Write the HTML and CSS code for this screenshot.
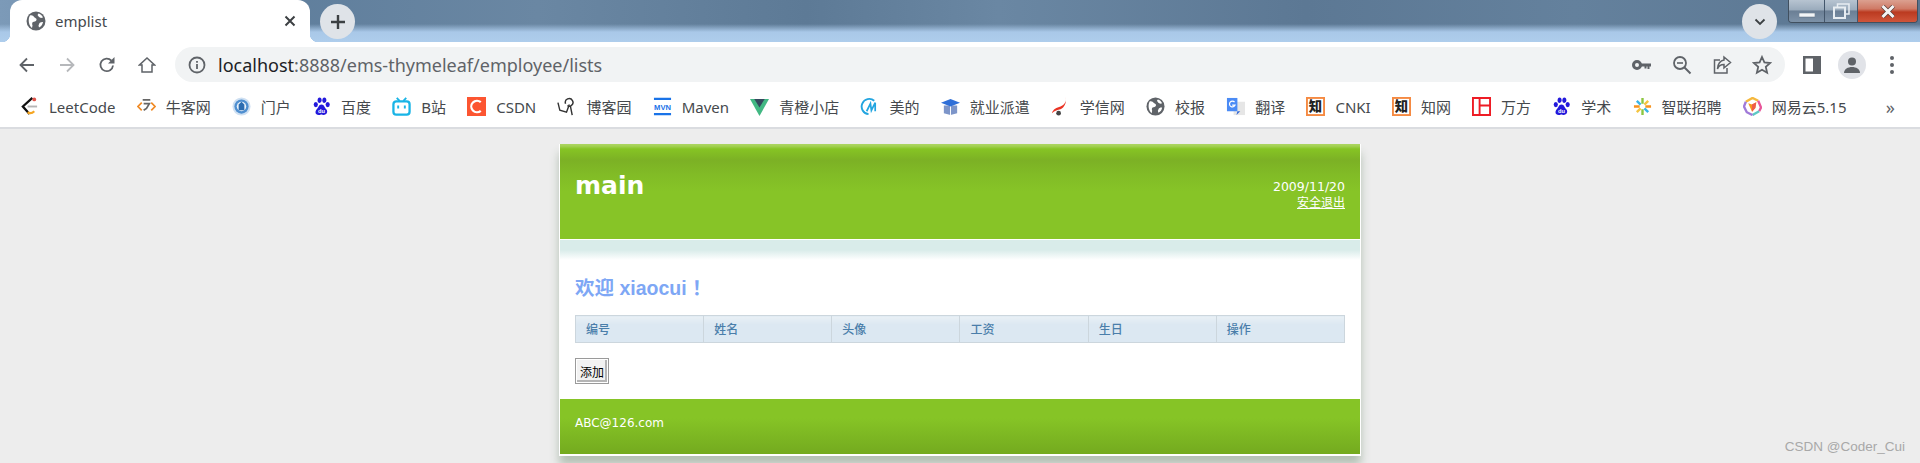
FILE: index.html
```html
<!DOCTYPE html>
<html lang="zh">
<head>
<meta charset="utf-8">
<title>emplist</title>
<link rel="stylesheet" href="styles.css">
</head>
<body>
<svg class="defs" width="0" height="0" aria-hidden="true">
  <defs>
    <symbol id="globe" viewBox="0 0 20 20"><circle cx="10" cy="10" r="9.500" fill="#5f6368"/><path d="M4 4.500c2-.5 3.500.5 4 1.500s3 1 2.500 3-2.500 1.500-3.500 2-1 2.500-.5 3.500l-.5 2.500C3 15 1.500 8.500 4 4.500zM12.500 2.500c2 .5 3.500 2 4.500 4l-2 .5-2-1-1.500-2zM13.500 12c1-1 2.500-1 3.500-1-.5 2.500-1.500 4.500-4 5.500l-.5-2z" fill="#fff"/></symbol>
    <symbol id="paw" viewBox="0 0 20 20"><g fill="#2319dc"><ellipse cx="4" cy="8" rx="2.200" ry="2.800"/><ellipse cx="8" cy="3.500" rx="2.100" ry="2.900"/><ellipse cx="13" cy="3.500" rx="2.100" ry="2.900"/><ellipse cx="16.500" cy="8" rx="2.200" ry="2.800"/><path d="M10 8c3 0 3 3 5 5s1 6-3 6c-1 0-1-.5-2-.5S9 19 7 19c-4 0-4-4-2-6s2-5 5-5z"/></g><text x="10" y="17" text-anchor="middle" class="paw-text">du</text></symbol>
    <symbol id="zhi" viewBox="0 0 20 20"><rect x="1" y="1" width="18" height="18" fill="#fff" stroke="#f58a42" stroke-width="2"/><text x="10" y="15" text-anchor="middle" class="zhi-text">知</text></symbol>
  </defs>
</svg>
<header class="chrome">
  <div class="tabstrip">
    <div class="tab">
      <svg class="tab-ico" width="20" height="20"><use href="#globe"/></svg>
      <span class="tab-title">emplist</span>
      <svg class="tab-close" width="12" height="12" viewBox="0 0 12 12"><path d="M1.500 1.500l9 9M10.500 1.500l-9 9" stroke="#3c4043" stroke-width="2"/></svg>
    </div>
    <div class="round-btn new-tab"><svg width="16" height="16" viewBox="0 0 16 16"><path d="M8 1v14M1 8h14" stroke="#3c4043" stroke-width="2.400"/></svg></div>
    <div class="spacer"></div>
    <div class="round-btn tab-search"><svg width="12" height="8" viewBox="0 0 12 8"><path d="M1.500 1.500L6 6l4.500-4.500" fill="none" stroke="#3c4043" stroke-width="1.800"/></svg></div>
    <div class="winbtns">
      <div class="win win-min"><svg width="16" height="5"><rect width="16" height="4" fill="#f2f5f7" stroke="#56677a" stroke-width=".5"/></svg></div>
      <div class="win win-max"><svg width="17" height="16" viewBox="0 0 17 16"><path d="M4.500 4V1h11.500v10h-4" fill="none" stroke="#e8edf2" stroke-width="1.500"/><path d="M1 4.500h11v10.500H1z" fill="none" stroke="#e8edf2" stroke-width="2"/></svg></div>
      <div class="win win-close"><svg width="16" height="13" viewBox="0 0 16 13"><path d="M2.500 1l11 11M13.500 1l-11 11" stroke="#5a3a34" stroke-width="4.400"/><path d="M2.500 1l11 11M13.500 1l-11 11" stroke="#f4f4f4" stroke-width="3"/></svg></div>
    </div>
  </div>
  <div class="toolbar">
    <div class="tool"><svg width="18" height="18" viewBox="0 0 18 18"><path d="M16 9H3M9 2.500L2.500 9 9 15.500" fill="none" stroke="#5f6368" stroke-width="1.800"/></svg></div>
    <div class="tool"><svg width="18" height="18" viewBox="0 0 18 18"><path d="M2 9h13M9 2.500L15.500 9 9 15.500" fill="none" stroke="#b6b8bb" stroke-width="1.800"/></svg></div>
    <div class="tool"><svg width="18" height="18" viewBox="0 0 18 18"><path d="M15 9.500A6.300 6.300 0 1 1 13.400 4.600" fill="none" stroke="#5f6368" stroke-width="1.800"/><path d="M16.500 1v6.500H10z" fill="#5f6368"/></svg></div>
    <div class="tool"><svg width="18" height="18" viewBox="0 0 18 18"><path d="M9 2L1.500 9H4v7h10V9h2.500z" fill="none" stroke="#5f6368" stroke-width="1.500"/></svg></div>
    <div class="omnibox">
      <svg class="info" width="18" height="18" viewBox="0 0 18 18"><circle cx="9" cy="9" r="7.500" fill="none" stroke="#5f6368" stroke-width="1.800"/><path d="M9 8v5M9 5v1.800" stroke="#5f6368" stroke-width="1.800"/></svg>
      <div class="url"><span class="host">localhost</span>:8888/ems-thymeleaf/employee/lists</div>
      <div class="omni-act"><svg width="20" height="12" viewBox="0 0 20 12"><circle cx="5" cy="6" r="3.500" fill="none" stroke="#5f6368" stroke-width="3"/><path d="M9 4.500h10v3h-1.500v2.500h-2V7.500h-1V9.500h-2V7.500H9z" fill="#5f6368"/></svg></div>
      <div class="omni-act"><svg width="20" height="20" viewBox="0 0 20 20"><circle cx="8" cy="8" r="6" fill="none" stroke="#5f6368" stroke-width="1.800"/><path d="M12.500 12.500l6 6" stroke="#5f6368" stroke-width="2"/><path d="M5 8h6" stroke="#5f6368" stroke-width="1.600"/></svg></div>
      <div class="omni-act"><svg width="20" height="20" viewBox="0 0 20 20"><path d="M8 5H2.500v13H15v-5" fill="none" stroke="#5f6368" stroke-width="1.500"/><path d="M12 2l6.500 5.500L12 13V9.500C9 9.500 6.500 11 5.500 14c0-5 3-8.500 6.500-9z" fill="none" stroke="#5f6368" stroke-width="1.500"/></svg></div>
      <div class="omni-act"><svg width="20" height="20" viewBox="0 0 20 20"><path d="M10 2l2.400 5.400 5.800.6-4.400 3.900 1.300 5.800-5.100-3-5.100 3 1.300-5.800L1.800 8l5.800-.6z" fill="none" stroke="#5f6368" stroke-width="1.800"/></svg></div>
    </div>
    <div class="tool side"><svg width="18" height="18" viewBox="0 0 18 18"><path d="M0 0h18v18H0zM2.500 2.500v13H10v-13z" fill="#5f6368" fill-rule="evenodd"/></svg></div>
    <div class="tool"><div class="avatar"><svg width="18" height="18" viewBox="0 0 18 18"><circle cx="9" cy="5.500" r="4" fill="#5f6368"/><path d="M1 17c0-4 4-6 8-6s8 2 8 6z" fill="#5f6368"/></svg></div></div>
    <div class="tool"><svg width="6" height="20" viewBox="0 0 6 20"><circle cx="3" cy="3" r="2" fill="#5f6368"/><circle cx="3" cy="10" r="2" fill="#5f6368"/><circle cx="3" cy="17" r="2" fill="#5f6368"/></svg></div>
  </div>
  <nav class="bookmarks">
    <a class="bm"><svg class="bi" viewBox="0 0 20 20"><path d="M13 1L3 10l7 8" fill="none" stroke="#111" stroke-width="2.400"/><path d="M8 10h10" stroke="#b5b5b5" stroke-width="2"/><path d="M8 16c3 2 5 1 7-1" fill="none" stroke="#f5a623" stroke-width="2.400"/><circle cx="15" cy="2.500" r="2" fill="#e0544a"/></svg><span>LeetCode</span></a>
    <a class="bm"><svg class="bi" viewBox="0 0 20 20"><path d="M5 6l-4 4 4 4M15 6l4 4-4 4" fill="none" stroke="#f08a24" stroke-width="1.800"/><path d="M6 3h8M7 7h6l-3 5-3 2" fill="none" stroke="#666" stroke-width="1.800"/></svg><span>牛客网</span></a>
    <a class="bm"><svg class="bi" viewBox="0 0 20 20"><circle cx="10" cy="10" r="9.500" fill="#cfe0f2"/><circle cx="10" cy="10" r="7.500" fill="#4f8fd0"/><circle cx="10" cy="10" r="5" fill="#eaf2fa"/><path d="M7 14V8l3-3 3 3v6z" fill="#2c6cb0"/></svg><span>门户</span></a>
    <a class="bm"><svg class="bi"><use href="#paw"/></svg><span>百度</span></a>
    <a class="bm"><svg class="bi" viewBox="0 0 20 20"><path d="M5 1l3 3M15 1l-3 3" stroke="#19b4e6" stroke-width="2"/><rect x="1.500" y="4.500" width="17" height="14" rx="3" fill="#fff" stroke="#19b4e6" stroke-width="2.400"/><path d="M6.500 9v3M13.500 9v3" stroke="#19b4e6" stroke-width="2"/></svg><span>B站</span></a>
    <a class="bm"><svg class="bi" viewBox="0 0 20 20"><rect width="20" height="20" fill="#fc5531"/><path d="M14.500 5.500A6 6 0 1 0 14.500 14.500" fill="none" stroke="#fff" stroke-width="2.400"/></svg><span>CSDN</span></a>
    <a class="bm"><svg class="bi" viewBox="0 0 20 20"><path d="M1 6l2 8 7 2 3-8" fill="none" stroke="#333" stroke-width="1.500"/><path d="M9 7a4 4 0 1 1 6 2c-1 1-3 1-4 0M14 9l1 5 1 5" fill="none" stroke="#333" stroke-width="1.500"/></svg><span>博客园</span></a>
    <a class="bm"><svg class="bi" viewBox="0 0 20 20"><path d="M1 2h18M1 18h18" stroke="#1a73e8" stroke-width="2.500"/><text x="10" y="13.500" text-anchor="middle" class="mvn-text">MVN</text></svg><span>Maven</span></a>
    <a class="bm"><svg class="bi" viewBox="0 0 20 20"><path d="M0 2h20L10 20z" fill="#42b883"/><path d="M4.500 2h11L10 11z" fill="#35495e"/></svg><span>青橙小店</span></a>
    <a class="bm"><svg class="bi" viewBox="0 0 20 20"><path d="M15 4A8 8 0 1 0 9 18" fill="none" stroke="#22a5e0" stroke-width="2"/><path d="M7 15l4-8 1 7 4-8v9" fill="none" stroke="#22a5e0" stroke-width="1.800"/></svg><span>美的</span></a>
    <a class="bm"><svg class="bi" viewBox="0 0 20 20"><path d="M3 9v8l7 2 7-2V9z" fill="#7d95c9"/><path d="M10 9v10" stroke="#fff"/><path d="M0 6l10-4 10 4-10 4z" fill="#2f6fd8"/></svg><span>就业派遣</span></a>
    <a class="bm"><svg class="bi" viewBox="0 0 20 20"><path d="M15 0c2 5-1 8-5 10-4 1-8 3-9 7 3-3 6-3 9-4 4-2 7-7 5-13z" fill="#ea3323"/><circle cx="8" cy="17" r="2.500" fill="#444"/></svg><span>学信网</span></a>
    <a class="bm"><svg class="bi"><use href="#globe"/></svg><span>校报</span></a>
    <a class="bm"><svg class="bi" viewBox="0 0 20 20"><rect x="8" y="5" width="12" height="14" fill="#e6e6e6"/><path d="M1 1h11v14H1z" fill="#4b8bf5"/><path d="M9 5.500a3 3 0 1 0 .5 3H6.500" fill="none" stroke="#fff" stroke-width="1.300"/><path d="M12 15l-1 4 4-4z" fill="#3367d6"/></svg><span>翻译</span></a>
    <a class="bm"><svg class="bi"><use href="#zhi"/></svg><span>CNKI</span></a>
    <a class="bm"><svg class="bi"><use href="#zhi"/></svg><span>知网</span></a>
    <a class="bm"><svg class="bi" viewBox="0 0 20 20"><path d="M1 1h18v18H1zM8 1v18M8 9h11" fill="none" stroke="#ee1c25" stroke-width="2"/></svg><span>万方</span></a>
    <a class="bm"><svg class="bi"><use href="#paw"/></svg><span>学术</span></a>
    <a class="bm"><svg class="bi" viewBox="0 0 20 20"><path d="M10 1v6M10 13v6" stroke="#8cc63f" stroke-width="2.500"/><path d="M1 10h6M13 10h6" stroke="#f7931e" stroke-width="2.500"/><path d="M4 4l4 4M12 12l4 4" stroke="#39b5e8" stroke-width="2.500"/><path d="M16 4l-4 4M8 12l-4 4" stroke="#f4c542" stroke-width="2.500"/></svg><span>智联招聘</span></a>
    <a class="bm"><svg class="bi" viewBox="0 0 20 20"><g fill="none" stroke-width="2.500"><path d="M3 5l7-4 6 3" stroke="#f5b83d"/><path d="M16 4l3 7-2 4" stroke="#e8559a"/><path d="M17 15l-7 4" stroke="#5cc9c4"/><path d="M10 19l-6-3-3-6 2-5" stroke="#a07ad8"/></g><path d="M5.500 6.500l4 1.500 4.500-2.500-1 6-3.500 4z" fill="#f7941e"/><path d="M9.500 8l4.500-2.500-1 6-3.500 4z" fill="#ef5a4c"/></svg><span>网易云5.15</span></a>
    <span class="more">»</span>
  </nav>
</header>

<main class="page">
  <div class="wrapper">
    <div class="top">
      <div class="logo">main</div>
      <div class="meta">
        <div>2009/11/20</div>
        <a class="logout">安全退出</a>
      </div>
    </div>
    <div class="band"></div>
    <div class="content">
      <h2 class="welcome">欢迎 xiaocui ！</h2>
      <table class="grid">
        <thead>
          <tr><th>编号</th><th>姓名</th><th>头像</th><th>工资</th><th>生日</th><th>操作</th></tr>
        </thead>
      </table>
      <button class="add" type="button">添加</button>
    </div>
    <div class="foot">ABC@126.com</div>
  </div>
  <div class="watermark">CSDN @Coder_Cui</div>
</main>
</body>
</html>
```
FILE: styles.css
```css
* { box-sizing: border-box; }
html, body { margin: 0; height: 463px; overflow: hidden; }
body { background: #ededed; font-family: "Noto Sans", "Noto Sans CJK SC", sans-serif; color: #3c4043; }
.defs { position: absolute; }
.paw-text { font: bold 6px "Liberation Sans", sans-serif; fill: #fff; }
.zhi-text { font: 900 14px "Noto Sans CJK SC", sans-serif; fill: #222; }
.mvn-text { font: bold 8px "Liberation Sans", sans-serif; fill: #1a73e8; }

.chrome { height: 129px; background: #fff; border-bottom: 2px solid #dadce0; }
.tabstrip {
  height: 42px; display: flex; align-items: flex-start; padding: 0 2px 0 10px;
  background:
    linear-gradient(180deg, rgba(90,117,144,0) 0, rgba(90,117,144,0) 24px, #a9c8e8 32px, #aecdec 42px),
    linear-gradient(90deg, #7c9ab8 0, #5f7e9c 14%, #6a87a3 28%, #5d7a96 42%, #6a87a3 52%, #5c7894 68%, #64819d 82%, #5a7590 100%);
}
.tab {
  position: relative; width: 300px; height: 42px; background: #fff; border-radius: 12px 12px 0 0;
  display: flex; align-items: center; padding: 0 14px 0 16px;
}
.tab::after {
  content: ""; position: absolute; right: -8px; bottom: 0; width: 8px; height: 8px;
  background: radial-gradient(circle at 100% 0, transparent 8px, #fff 8.500px);
}
.tab::before {
  content: ""; position: absolute; left: -8px; bottom: 0; width: 8px; height: 8px;
  background: radial-gradient(circle at 0 0, transparent 8px, #fff 8.500px);
}
.tab-ico { flex: none; }
.tab-title { margin-left: 9px; font-size: 15px; flex: 1; color: #45494d; }
.round-btn {
  width: 35px; height: 35px; border-radius: 50%; background: #dfe3e8; margin-top: 4px;
  display: flex; align-items: center; justify-content: center; flex: none;
}
.new-tab { margin-left: 10px; }
.spacer { flex: 1; }
.tab-search { margin-right: 11px; }
.winbtns {
  display: flex; width: 130px; height: 23px; border: 1px solid #41505f; border-top: 0;
  border-radius: 0 0 4px 4px; overflow: hidden; flex: none;
}
.win { display: flex; align-items: center; justify-content: center; height: 100%; border-right: 1px solid #43566b; }
.win-min, .win-max { background: linear-gradient(180deg, #b7c4d1 0, #9aabbc 45%, #6b7f95 50%, #7d92a8 100%); }
.win-min { width: 36px; }
.win-min svg { margin-top: 8px; }
.win-max { width: 33px; }
.win-close { flex: 1; border-right: 0; background: linear-gradient(180deg, #dba090 0, #cf7a66 40%, #bb3a20 55%, #d0553a 100%); }

.toolbar { height: 44px; display: flex; align-items: flex-start; padding: 5px 8px 0 7px; }
.tool { width: 40px; height: 35px; display: flex; align-items: center; justify-content: center; flex: none; }
.omnibox {
  flex: 1; height: 35px; margin-left: 8px; border-radius: 18px; background: #f1f3f4;
  display: flex; align-items: center; padding: 0 3px 0 13px;
}
.info { flex: none; }
.url { margin-left: 12px; flex: 1; font-size: 18px; color: #5f6368; white-space: nowrap; }
.host { color: #202124; }
.omni-act { width: 40px; height: 35px; display: flex; align-items: center; justify-content: center; flex: none; }
.side { margin-left: 7px; }
.avatar { width: 28px; height: 28px; border-radius: 50%; background: #e1e3e8; display: flex; align-items: center; justify-content: center; }

.bookmarks { height: 41px; display: flex; align-items: center; gap: 21.200px; padding-left: 20px; font-size: 15px; color: #45494d; white-space: nowrap; }
.bm { display: flex; align-items: center; gap: 10px; }
.bi { width: 19px; height: 19px; flex: none; }
.more { margin-left: auto; margin-right: 25px; font-size: 18px; line-height: 1; color: #5f6368; }

.page { display: flex; justify-content: center; padding-top: 15px; }
.wrapper {
  width: 802px; height: 312px; background: #fff; border: 1px solid #fff; border-top: 0; border-bottom-width: 2px;
  box-shadow: 0 9px 9px #b4c0b4;
}
.top {
  height: 96px; display: flex; justify-content: space-between; border-bottom: 1px solid #fff; padding: 0 15px;
  background: linear-gradient(180deg, #acd660 0, #a4d155 2px, #86c424 5px, #7cb125 16px, #81bb26 30px, #87c427 48px, #87c427 100%);
}
.logo { margin-top: 22px; font: bold 25px/40px "DejaVu Sans", sans-serif; color: #fff; }
.meta { margin-top: 35px; text-align: right; font: 12.500px/16px "DejaVu Sans", "Noto Sans CJK SC", sans-serif; color: #fff; }
.logout { display: block; font-size: 12px; text-decoration: underline; }
.band { height: 20px; background: linear-gradient(180deg, #d9ecea 0, #d9ecea 50%, #fff 100%); }
.content { height: 139px; padding: 14px 15px 0; }
.welcome { margin: 0; font: bold 19.500px/28px "Liberation Sans", "Noto Sans CJK SC", sans-serif; color: #7ea7f5; }
.grid { margin-top: 13px; width: 770px; height: 28px; border-collapse: collapse; table-layout: fixed; }
.grid th {
  padding: 0 0 0 10px; text-align: left; font: 500 12px/16px "Noto Sans CJK SC", sans-serif; color: #4a7eaa;
  border: 1px solid #ccd6dd; background: linear-gradient(180deg, #e9f0f5 0, #dce8f2 30%, #dce8f2 100%);
}
.add {
  display: block; margin-top: 15px; width: 34px; height: 26px; padding: 0; font: 12px "Noto Sans CJK SC", sans-serif; color: #000;
  background: #f2f2f2; border: 1px solid #9a9a9a; box-shadow: inset 0 0 0 1px #fff, inset -1px -1px 0 2px #b5b5b5;
}
.foot {
  height: 55px; padding: 15px 15px 0; font: 12px/18px "DejaVu Sans", sans-serif; color: #fff;
  background: linear-gradient(180deg, #86c426 0, #86c426 35%, #74aa1f 100%);
}
.watermark { position: absolute; right: 15px; top: 439px; font: 13.500px/16px "Liberation Sans", sans-serif; color: #a8a8a8; }
```
